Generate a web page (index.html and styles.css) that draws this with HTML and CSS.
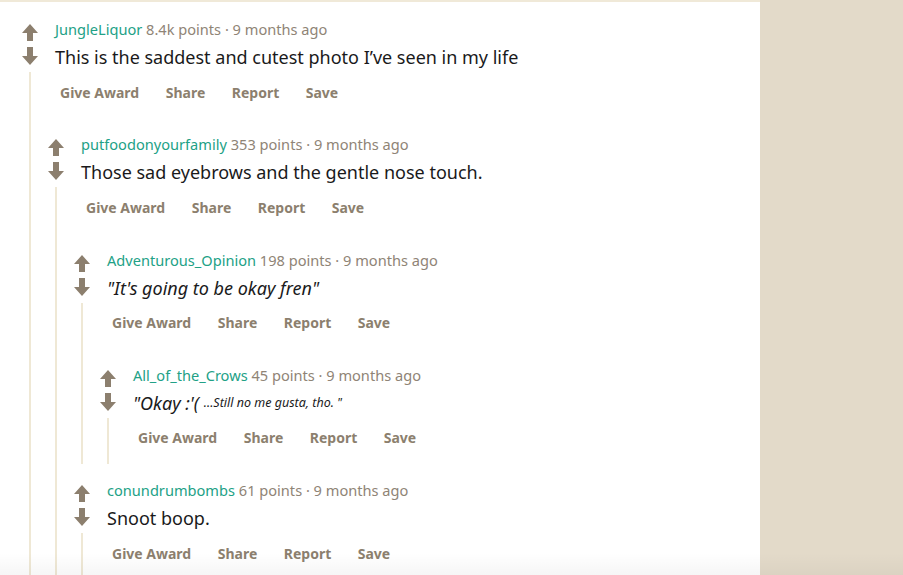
FILE: index.html
```html
<!DOCTYPE html>
<html>
<head>
<meta charset="utf-8">
<link rel="stylesheet" href="styles.css">
</head>
<body>
<div class="page">
  <main class="thread">
    <div class="comment">
      <div class="vote">
        <svg class="up" viewBox="0 0 16 17"><path d="M8 0 L16 9 L11 9 L11 17 L5 17 L5 9 L0 9 Z"/></svg>
        <svg class="down" viewBox="0 0 16 18"><path d="M5 0 L11 0 L11 9 L16 9 L8 18 L0 9 L5 9 Z"/></svg>
        <span class="line"></span>
      </div>
      <div class="main">
        <div class="meta"><span class="author">JungleLiquor</span> 8.4k points · 9 months ago</div>
        <p class="body">This is the saddest and cutest photo I’ve seen in my life</p>
        <div class="actions"><span>Give Award</span><span>Share</span><span>Report</span><span>Save</span></div>
        <div class="children">
          <div class="comment">
            <div class="vote">
              <svg class="up" viewBox="0 0 16 17"><path d="M8 0 L16 9 L11 9 L11 17 L5 17 L5 9 L0 9 Z"/></svg>
              <svg class="down" viewBox="0 0 16 18"><path d="M5 0 L11 0 L11 9 L16 9 L8 18 L0 9 L5 9 Z"/></svg>
              <span class="line"></span>
            </div>
            <div class="main">
              <div class="meta"><span class="author">putfoodonyourfamily</span> 353 points · 9 months ago</div>
              <p class="body">Those sad eyebrows and the gentle nose touch.</p>
              <div class="actions"><span>Give Award</span><span>Share</span><span>Report</span><span>Save</span></div>
              <div class="children">
                <div class="comment">
                  <div class="vote">
                    <svg class="up" viewBox="0 0 16 17"><path d="M8 0 L16 9 L11 9 L11 17 L5 17 L5 9 L0 9 Z"/></svg>
                    <svg class="down" viewBox="0 0 16 18"><path d="M5 0 L11 0 L11 9 L16 9 L8 18 L0 9 L5 9 Z"/></svg>
                    <span class="line"></span>
                  </div>
                  <div class="main">
                    <div class="meta"><span class="author">Adventurous_Opinion</span> 198 points · 9 months ago</div>
                    <p class="body"><em>"It's going to be okay fren"</em></p>
                    <div class="actions"><span>Give Award</span><span>Share</span><span>Report</span><span>Save</span></div>
                    <div class="children">
                      <div class="comment">
                        <div class="vote">
                          <svg class="up" viewBox="0 0 16 17"><path d="M8 0 L16 9 L11 9 L11 17 L5 17 L5 9 L0 9 Z"/></svg>
                          <svg class="down" viewBox="0 0 16 18"><path d="M5 0 L11 0 L11 9 L16 9 L8 18 L0 9 L5 9 Z"/></svg>
                          <span class="line"></span>
                        </div>
                        <div class="main">
                          <div class="meta"><span class="author">All_of_the_Crows</span> 45 points · 9 months ago</div>
                          <p class="body"><em>"Okay :'( <sup>...Still no me gusta, tho. "</sup></em></p>
                          <div class="actions"><span>Give Award</span><span>Share</span><span>Report</span><span>Save</span></div>
                        </div>
                      </div>
                    </div>
                  </div>
                </div>
                <div class="comment">
                  <div class="vote">
                    <svg class="up" viewBox="0 0 16 17"><path d="M8 0 L16 9 L11 9 L11 17 L5 17 L5 9 L0 9 Z"/></svg>
                    <svg class="down" viewBox="0 0 16 18"><path d="M5 0 L11 0 L11 9 L16 9 L8 18 L0 9 L5 9 Z"/></svg>
                    <span class="line"></span>
                  </div>
                  <div class="main">
                    <div class="meta"><span class="author">conundrumbombs</span> 61 points · 9 months ago</div>
                    <p class="body">Snoot boop.</p>
                    <div class="actions"><span>Give Award</span><span>Share</span><span>Report</span><span>Save</span></div>
                  </div>
                </div>
              </div>
            </div>
          </div>
        </div>
      </div>
    </div>
  </main>
  <aside class="sidebar"></aside>
  <div class="fade"></div>
</div>
</body>
</html>
```

FILE: styles.css
```css
html, body {
  margin: 0;
  padding: 0;
  height: 575px;
  overflow: hidden;
  background: #ffffff;
}

.page {
  position: relative;
  display: flex;
  width: 903px;
  height: 575px;
  overflow: hidden;
}

.thread {
  width: 743px;
  padding: 1px 0 0 17px;
  border-top: 2px solid #f0e9d8;
  background: #ffffff;
  font-family: "Noto Sans", sans-serif;
}

.sidebar {
  flex: 1;
  background: #e3dac9;
}

.fade {
  position: absolute;
  left: 0;
  right: 0;
  bottom: 0;
  height: 22px;
  background: linear-gradient(to bottom, rgba(0,0,0,0), rgba(0,0,0,0.035));
  pointer-events: none;
}

.comment {
  display: flex;
  padding-top: 17px;
}

.vote {
  width: 26px;
  flex: none;
  display: flex;
  flex-direction: column;
  align-items: center;
  padding-top: 4px;
}

.vote svg {
  display: block;
  fill: #8c7f6e;
}

.vote .up {
  width: 16px;
  height: 17px;
  margin-bottom: 6px;
}

.vote .down {
  width: 16px;
  height: 18px;
  margin-bottom: 7px;
}

.vote .line {
  display: block;
  width: 2px;
  flex: 1;
  background: #efe8d5;
}

.main {
  flex: 1;
  min-width: 0;
}

.meta {
  height: 20px;
  line-height: 18px;
  padding-left: 12px;
  margin-bottom: 4px;
  font-size: 14.6px;
  color: #8f8476;
  white-space: nowrap;
}

.author {
  color: #22a186;
}

.body {
  margin: 0 0 4px 0;
  height: 26px;
  line-height: 26px;
  padding-left: 12px;
  font-size: 18px;
  color: #1a1a1b;
  white-space: nowrap;
}

.body sup {
  font-size: 12.5px;
  vertical-align: 3px;
  line-height: 0;
}

.actions {
  display: flex;
  gap: 26.5px;
  height: 36px;
  align-items: center;
  padding-left: 17px;
  padding-bottom: 8.3px;
  font-size: 14px;
  font-weight: 700;
  color: #8c7f6e;
}
```
